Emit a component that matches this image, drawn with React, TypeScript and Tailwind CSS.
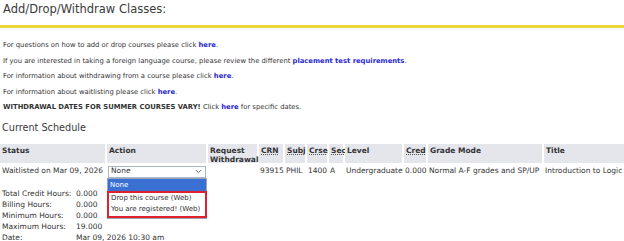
const links = 'font-bold text-[#2a2ad0]'

const headers = [
  { label: 'Status', w: 'w-[105px]' },
  { label: 'Action', w: 'w-[99px]' },
  { label: 'Request Withdrawal', w: 'w-[49px]' },
  { label: 'CRN', w: 'w-[24px]', abbr: true },
  { label: 'Subj', w: 'w-[20px]', abbr: true },
  { label: 'Crse', w: 'w-[20px]', abbr: true },
  { label: 'Sec', w: 'w-[14px]', abbr: true },
  { label: 'Level', w: 'w-[57px]' },
  { label: 'Cred', w: 'w-[22px]', abbr: true },
  { label: 'Grade Mode', w: 'w-[114px]' },
  { label: 'Title', w: 'w-[80px]' },
]

const totals = [
  ['Total Credit Hours:', '0.000'],
  ['Billing Hours:', '0.000'],
  ['Minimum Hours:', '0.000'],
  ['Maximum Hours:', '19.000'],
  ['Date:', 'Mar 09, 2026 10:30 am'],
]

const ActionSelect = () => (
  <div className="relative">
    <div className="flex h-[12px] w-[98px] items-center justify-between border border-[#a9b7c9] bg-white px-[2px]">
      <span>None</span>
      <svg width="7" height="5" viewBox="0 0 7 5" className="mr-[1px]">
        <path d="M1 1.2 3.5 3.6 6 1.2" fill="none" stroke="#6b7280" strokeWidth="1" />
      </svg>
    </div>
    <ul className="absolute left-[-1px] top-[12px] z-10 w-[100px] whitespace-nowrap border border-[#9aa6b5] bg-white text-[7px]">
      <li className="h-[12px] bg-[#3a70d4] pl-[2px] leading-[12px] text-white">None</li>
      <li className="mx-[-1px] border-2 border-[#e0202c] pb-[1px] pl-[2px]">
        <div className="h-[11px] leading-[11px]">Drop this course (Web)</div>
        <div className="h-[11px] leading-[11px]">You are registered! (Web)</div>
      </li>
    </ul>
  </div>
)

export default function App() {
  return (
    <div className="h-[241px] w-[624px] overflow-hidden bg-white font-['DejaVu_Sans',sans-serif] text-[#333]">
      <h1 className="pl-[3px] pt-[1px] text-[11.5px] leading-[16px] text-[#3a3a3a]">
        Add/Drop/Withdraw Classes:
      </h1>
      <div className="mt-[8px] h-[3px] bg-[#ecd73a]" />

      <section className="mt-[13px] space-y-[7.5px] pl-[3px] text-[6.8px] leading-[8px]">
        <p>
          For questions on how to add or drop courses please click <span className={links}>here</span>.
        </p>
        <p>
          If you are interested in taking a foreign language course, please review the different{' '}
          <span className={links}>placement test requirements</span>.
        </p>
        <p>
          For information about withdrawing from a course please click <span className={links}>here</span>.
        </p>
        <p>
          For information about waitlisting please click <span className={links}>here</span>.
        </p>
        <p>
          <span className="font-bold">WITHDRAWAL DATES FOR SUMMER COURSES VARY!</span> Click{' '}
          <span className={links}>here</span> for specific dates.
        </p>
      </section>

      <h2 className="mt-[11px] pl-[2px] text-[9.7px] leading-[12px] text-[#3a3a3a]">Current Schedule</h2>

      <div className="mt-[10px] text-[7.5px] leading-[8.5px]">
        <div className="flex gap-[2px]">
          {headers.map((h) => (
            <div
              key={h.label}
              className={`${h.w} h-[19px] shrink-0 bg-[#e5e5ec] pl-[2px] pt-[3px] font-bold text-[#333]`}
            >
              {h.abbr ? (
                <span className="underline decoration-dotted decoration-[#555] underline-offset-[1px]">{h.label}</span>
              ) : (
                h.label
              )}
            </div>
          ))}
        </div>

        <div className="mt-[2px] flex h-[13px] items-center gap-[2px]">
          <div className="w-[105px] shrink-0 pl-[2px]">Waitlisted on Mar 09, 2026</div>
          <div className="w-[99px] shrink-0 pl-[1px]">
            <ActionSelect />
          </div>
          <div className="w-[49px] shrink-0" />
          <div className="w-[24px] shrink-0 pl-[1px]">93915</div>
          <div className="w-[20px] shrink-0 pl-[1px]">PHIL</div>
          <div className="w-[20px] shrink-0 pl-[1px]">1400</div>
          <div className="w-[14px] shrink-0 pl-[1px]">A</div>
          <div className="w-[57px] shrink-0 pl-[1px]">Undergraduate</div>
          <div className="w-[22px] shrink-0 pl-[1px]">0.000</div>
          <div className="w-[114px] shrink-0 pl-[1px]">Normal A-F grades and SP/UP</div>
          <div className="w-[80px] shrink-0 whitespace-nowrap pl-[1px]">Introduction to Logic</div>
        </div>

        <div className="mt-[12px] space-y-[2.5px] pl-[2px]">
          {totals.map(([k, v]) => (
            <div key={k} className="flex">
              <span className="w-[74px]">{k}</span>
              <span>{v}</span>
            </div>
          ))}
        </div>
      </div>
    </div>
  )
}
